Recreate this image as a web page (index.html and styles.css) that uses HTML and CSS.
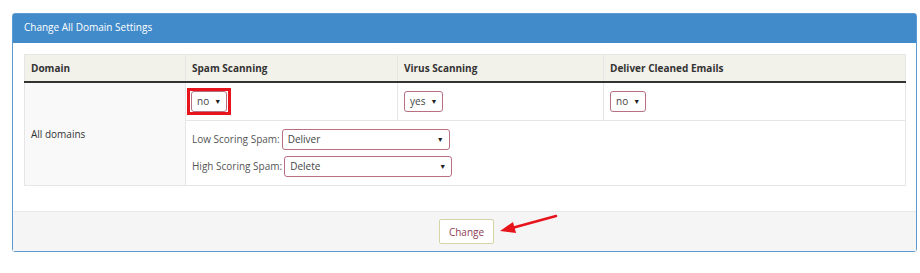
FILE: index.html
```html
<!DOCTYPE html>
<html lang="en">
<head>
    <meta charset="UTF-8">
    <title>Change All Domain Settings</title>
    <link rel="stylesheet" href="styles.css">
</head>
<body>
    <div class="panel">
        <div class="panel-heading">Change All Domain Settings</div>
        <div class="panel-body">
            <table class="settings">
                <thead>
                    <tr>
                        <th class="col-domain">Domain</th>
                        <th class="col-spam">Spam Scanning</th>
                        <th class="col-virus">Virus Scanning</th>
                        <th>Deliver Cleaned Emails</th>
                    </tr>
                </thead>
                <tbody>
                    <tr class="row-main">
                        <td class="domain-cell" rowspan="2">All domains</td>
                        <td>
                            <span class="highlight"><span class="select small">no</span></span>
                        </td>
                        <td><span class="select small">yes</span></td>
                        <td><span class="select small">no</span></td>
                    </tr>
                    <tr class="row-sub">
                        <td colspan="3">
                            <div class="field">
                                <label>Low Scoring Spam:</label>
                                <span class="select wide">Deliver</span>
                            </div>
                            <div class="field">
                                <label>High Scoring Spam:</label>
                                <span class="select wide">Delete</span>
                            </div>
                        </td>
                    </tr>
                </tbody>
            </table>
        </div>
        <div class="panel-footer">
            <button class="btn">Change</button>
            <svg class="arrow" width="64" height="24" viewBox="0 0 64 24">
                <line x1="58" y1="3" x2="14" y2="15" stroke="#e8141c" stroke-width="2.5" stroke-linecap="round"/>
                <polygon points="2,18 15,9 18,20" fill="#e8141c"/>
            </svg>
        </div>
    </div>
</body>
</html>
```

FILE: styles.css
```css
body {
    font-family: 'Open Sans', sans-serif;
    font-size: 10px;
    color: #333;
    background-color: #fff;
    margin: 0;
    padding: 13px 3px 0 12px;
}
.panel {
    border: 1px solid #5b9bd1;
    border-radius: 3px;
    background-color: #fff;
    width: 903px;
}
.panel-heading {
    background-color: #428bca;
    color: #fff;
    height: 29px;
    line-height: 27px;
    padding: 0 11px;
    font-size: 10px;
}
.panel-body {
    padding: 11px 11px 25px 11px;
}
.settings {
    width: 882px;
    border-collapse: collapse;
}
.settings th,
.settings td {
    border: 1px solid #e6e6e6;
    text-align: left;
    vertical-align: middle;
    padding: 0 6px;
}
.settings th {
    background-color: #f2f1ea;
    font-weight: 700;
    height: 26px;
    border-bottom: 2px solid #333;
}
.col-domain {
    width: 148px;
}
.col-spam {
    width: 199px;
}
.col-virus {
    width: 193px;
}
.row-main td {
    height: 37px;
}
.domain-cell {
    background-color: #f9f9f9;
}
.row-sub td {
    height: 63px;
    padding-top: 1px;
}
.field {
    display: flex;
    align-items: center;
    margin: 4px 0 6px 0;
}
.field label {
    color: #555;
}
.select {
    display: inline-block;
    box-sizing: border-box;
    border: 1px solid #b86f82;
    border-radius: 3px;
    height: 21px;
    line-height: 19px;
    padding: 0 5px;
    color: #444;
    background-color: #fff;
    position: relative;
}
.select::after {
    content: "\25BC";
    font-size: 7px;
    color: #222;
    position: absolute;
    right: 5px;
    top: 0;
}
.select.small {
    padding-right: 17px;
}
.select.wide {
    width: 168px;
    margin-left: 2px;
}
.highlight {
    display: inline-block;
    border: 3px solid #e8141c;
    padding: 0 1px;
    margin-left: -5px;
    line-height: 0;
    vertical-align: middle;
}
.highlight .select {
    line-height: 19px;
}
.panel-footer {
    background-color: #f5f5f5;
    border-top: 1px solid #e8e8e8;
    height: 39px;
    display: flex;
    justify-content: center;
    align-items: center;
    position: relative;
}
.btn {
    font-family: 'Open Sans', sans-serif;
    font-size: 10px;
    color: #8e3c55;
    background-color: #fff;
    border: 1px solid #d4d4a6;
    border-radius: 2px;
    height: 25px;
    padding: 0 9px;
    margin-left: 4px;
}
.arrow {
    position: absolute;
    left: 485px;
    top: 1px;
}
```
